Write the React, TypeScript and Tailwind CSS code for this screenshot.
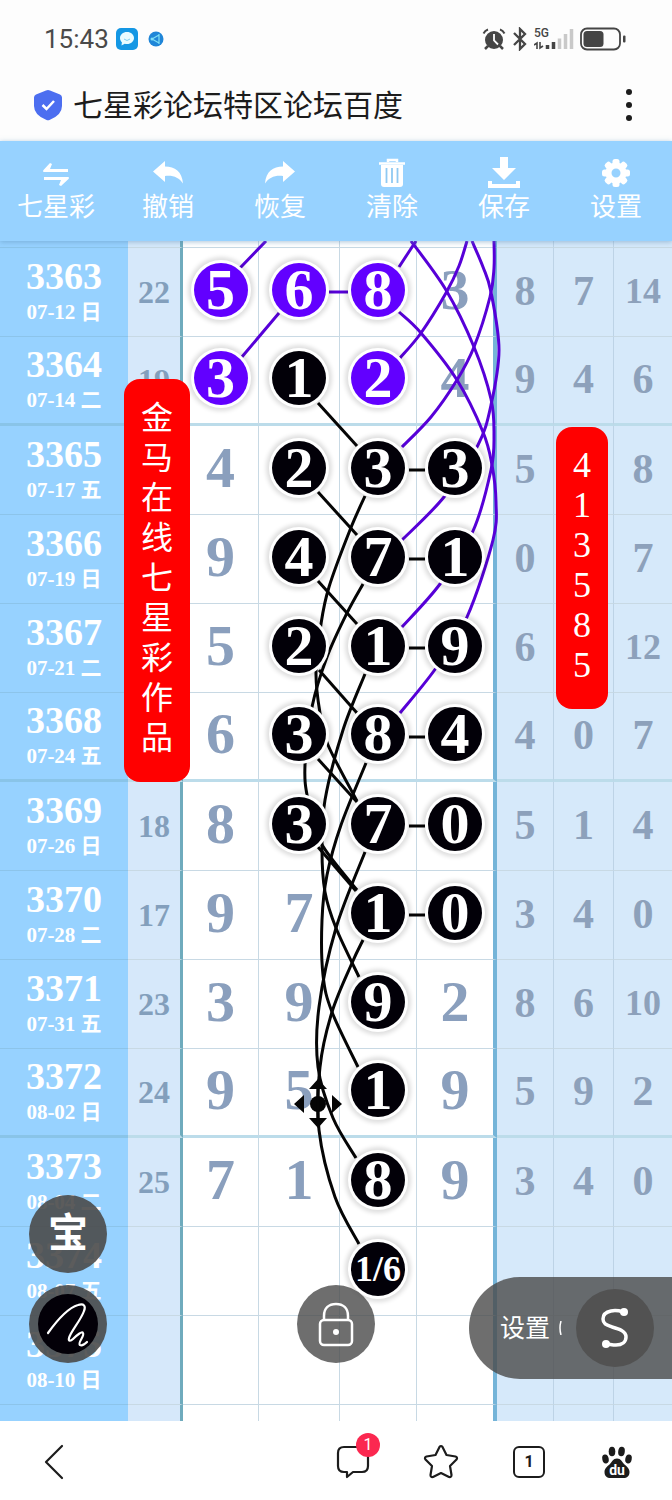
import type { ReactNode } from 'react'

interface Draw {
  id: string
  date: string
  sum: string
  main: string[]
  extra: string[]
}

// main cells: 'p' prefix is a purple ball, 'b' prefix is a black ball
const draws: Draw[] = [
  { id: '3363', date: '07-12 日', sum: '22', main: ['p5', 'p6', 'p8', '3'], extra: ['8', '7', '14'] },
  { id: '3364', date: '07-14 二', sum: '19', main: ['p3', 'b1', 'p2', '4'], extra: ['9', '4', '6'] },
  { id: '3365', date: '07-17 五', sum: '', main: ['4', 'b2', 'b3', 'b3'], extra: ['5', '', '8'] },
  { id: '3366', date: '07-19 日', sum: '', main: ['9', 'b4', 'b7', 'b1'], extra: ['0', '', '7'] },
  { id: '3367', date: '07-21 二', sum: '', main: ['5', 'b2', 'b1', 'b9'], extra: ['6', '', '12'] },
  { id: '3368', date: '07-24 五', sum: '', main: ['6', 'b3', 'b8', 'b4'], extra: ['4', '0', '7'] },
  { id: '3369', date: '07-26 日', sum: '18', main: ['8', 'b3', 'b7', 'b0'], extra: ['5', '1', '4'] },
  { id: '3370', date: '07-28 二', sum: '17', main: ['9', '7', 'b1', 'b0'], extra: ['3', '4', '0'] },
  { id: '3371', date: '07-31 五', sum: '23', main: ['3', '9', 'b9', '2'], extra: ['8', '6', '10'] },
  { id: '3372', date: '08-02 日', sum: '24', main: ['9', '5', 'b1', '9'], extra: ['5', '9', '2'] },
  { id: '3373', date: '08-04 二', sum: '25', main: ['7', '1', 'b8', '9'], extra: ['3', '4', '0'] },
  { id: '3374', date: '08-07 五', sum: '', main: ['', '', 'b1/6', ''], extra: ['', '', ''] },
  { id: '3375', date: '08-10 日', sum: '', main: ['', '', '', ''], extra: ['', '', ''] }
]

type Point = [number, number]

const purpleLines: Point[][] = [
  [[266, 241], [240, 268]],
  [[279, 313], [241, 358]],
  [[329, 292], [348, 292]],
  [[399, 267], [416, 241]],
  [[467, 241], [459, 266], [446, 293], [421, 333], [400, 358]],
  [[494, 241], [494, 268], [490, 297], [474, 347], [457, 380], [431, 417], [402, 447]],
  [[472, 241], [483, 267], [491, 292], [499, 350], [491, 405], [478, 445], [444, 497], [402, 540]],
  [[411, 241], [446, 290], [474, 347], [491, 399], [494, 435], [491, 470], [473, 531], [440, 584], [402, 627]],
  [[399, 312], [421, 333], [457, 380], [483, 432], [492, 465], [496, 502], [493, 540], [467, 617], [436, 668], [400, 713]]
]

const blackLines: Point[][] = [
  [[409, 470], [425, 470]],
  [[409, 559], [425, 559]],
  [[409, 648], [425, 648]],
  [[409, 737], [425, 737]],
  [[409, 826], [425, 826]],
  [[409, 915], [425, 915]],
  [[318, 403], [357, 446]],
  [[318, 492], [357, 535]],
  [[318, 581], [357, 624]],
  [[319, 670], [357, 713]],
  [[318, 759], [357, 802]],
  [[318, 847], [356, 891]],
  [[365, 496], [350, 530], [329, 587], [321, 624], [316, 673], [320, 713], [328, 745], [357, 801]],
  [[363, 584], [347, 613], [327, 657], [312, 707], [305, 765], [308, 800], [321, 843], [357, 890]],
  [[365, 674], [343, 730], [325, 800], [322, 850], [325, 892], [336, 928], [359, 977]],
  [[366, 763], [341, 825], [327, 875], [322, 920], [323, 975], [332, 1012], [358, 1067]],
  [[365, 852], [336, 928], [319, 1007], [318, 1067], [333, 1118], [356, 1158]],
  [[363, 940], [352, 963], [332, 1012], [320, 1067], [319, 1130], [335, 1197], [359, 1244]]
]

function smooth(pts: Point[]) {
  let d = `M${pts[0][0]} ${pts[0][1]}`
  for (let i = 0; i < pts.length - 1; i++) {
    const p0 = pts[i - 1] || pts[i]
    const p1 = pts[i]
    const p2 = pts[i + 1]
    const p3 = pts[i + 2] || p2
    d += ` C${p1[0] + (p2[0] - p0[0]) / 6} ${p1[1] + (p2[1] - p0[1]) / 6} ${p2[0] - (p3[0] - p1[0]) / 6} ${p2[1] - (p3[1] - p1[1]) / 6} ${p2[0]} ${p2[1]}`
  }
  return d
}

function MainCell({ value }: { value: string }) {
  const kind = value[0]
  if (kind !== 'p' && kind !== 'b') return <>{value}</>
  const text = value.slice(1)
  const color = kind === 'p' ? 'bg-[#6200ff]' : 'bg-[#020008]'
  const size = text.length > 1 ? 'text-[36px]' : 'text-[58px]'
  return (
    <span
      className={`relative z-10 mx-auto flex size-[54px] items-center justify-center rounded-full leading-none text-white ring-3 ring-white shadow-[0_0_4px_6px_rgba(0,0,0,0.13)] ${color} ${size}`}
    >
      {text}
    </span>
  )
}

function Row({ draw, thick }: { draw: Draw; thick: boolean }) {
  const line = thick ? 'border-b-3 border-b-[#bcdcea]' : 'border-b border-b-[#c8d9e4]'
  const blueLine = thick ? 'border-b-3 border-b-[#89c4e8]' : 'border-b border-b-[#8cc4ea]'
  return (
    <tr className="h-[89px]">
      <th scope="row" className={`bg-[#97d2ff] p-0 font-bold text-white ${blueLine}`}>
        <div className="text-[38px] leading-[38px]">{draw.id}</div>
        <div className="mt-0.5 text-[21px] leading-[30px]">{draw.date}</div>
      </th>
      <td className={`border-r-3 border-r-[#6fabbd] bg-[#d6e8fa] p-0 text-[32px] text-[#839fbc] ${line}`}>{draw.sum}</td>
      {draw.main.map((value, i) => (
        <td
          key={i}
          className={`bg-white p-0 pb-1 text-[58px] leading-none text-[#8a9fbd] ${line} ${i === 3 ? 'border-r-4 border-r-[#74b4d8]' : 'border-r border-r-[#c8d9e4]'}`}
        >
          <MainCell value={value} />
        </td>
      ))}
      {draw.extra.map((value, i) => (
        <td
          key={i}
          className={`border-r border-r-[#bdd3e6] bg-[#d6e9fa] p-0 pb-0.5 leading-none text-[#8da1bb] last:border-r-0 ${line} ${value.length > 1 ? 'text-[36px]' : 'text-[42px]'}`}
        >
          {value}
        </td>
      ))}
    </tr>
  )
}

// partial rows above and below the visible draws
function Spacer({ height, bordered }: { height: string; bordered: boolean }) {
  const line = bordered ? 'border-b border-b-[#c8d9e4]' : ''
  return (
    <tr className={height}>
      <td className={`bg-[#97d2ff] p-0 ${bordered ? 'border-b border-b-[#8cc4ea]' : ''}`} />
      <td className={`border-r-3 border-r-[#6fabbd] bg-[#d6e8fa] p-0 ${line}`} />
      <td className={`border-r border-r-[#c8d9e4] bg-white p-0 ${line}`} />
      <td className={`border-r border-r-[#c8d9e4] bg-white p-0 ${line}`} />
      <td className={`border-r border-r-[#c8d9e4] bg-white p-0 ${line}`} />
      <td className={`border-r-4 border-r-[#74b4d8] bg-white p-0 ${line}`} />
      <td className={`border-r border-r-[#bdd3e6] bg-[#d6e9fa] p-0 ${line}`} />
      <td className={`border-r border-r-[#bdd3e6] bg-[#d6e9fa] p-0 ${line}`} />
      <td className={`bg-[#d6e9fa] p-0 ${line}`} />
    </tr>
  )
}

function StatusBar() {
  return (
    <div className="flex h-[78px] items-center pr-[46px] pl-11 text-[#4a4a4a]">
      <span className="font-[Roboto,sans-serif] text-[26px]">15:43</span>
      <svg viewBox="0 0 22 22" className="ml-[7px] size-[22px]">
        <rect width="22" height="22" rx="5" fill="#1497e4" />
        <path d="M11 4c4 0 7 2.700 7 6s-3 6-7 6c-.8 0-1.500-.1-2.200-.3L5.500 17.500l.4-3.200C4.700 13.200 4 11.700 4 10c0-3.300 3-6 7-6z" fill="#e8fbff" />
        <path d="M8 11q3 3 6 0" stroke="#7fd0f2" fill="none" />
      </svg>
      <svg viewBox="0 0 16 16" className="ml-[10px] size-4">
        <circle cx="8" cy="8" r="7.500" fill="#1f86d8" />
        <path d="M4 8l7-4M4 8l7 4M11 3v10" stroke="#7fe0f5" strokeWidth="1.200" fill="none" />
        <circle cx="4" cy="8" r="1.500" fill="#7fe0f5" />
      </svg>
      <div className="ml-auto flex items-center">
        <svg viewBox="0 0 24 24" className="size-6" fill="none" stroke="#454545">
          <circle cx="12" cy="13" r="9" fill="#454545" stroke="none" />
          <path d="M1.500 6.500Q3 3.500 6 2.500M22.500 6.500Q21 3.500 18 2.500" strokeWidth="2" />
          <path d="M6 19l-3 3M18 19l3 3" strokeWidth="2.500" />
          <path d="M12 7v6.500l4 4" stroke="#fff" strokeWidth="1.800" />
        </svg>
        <svg viewBox="0 0 16 24" className="ml-[6px] h-6 w-4" fill="none" stroke="#454545" strokeWidth="2.300">
          <path d="M2 6l11 11-5 5V2l5 5L2 18" />
        </svg>
        <svg viewBox="0 0 40 24" className="ml-[6px] h-6 w-10">
          <text x="0" y="10" fontSize="12" fontWeight="500" fontFamily="Roboto, sans-serif" fill="#454545">5G</text>
          <path d="M0 18l3-2v6M6 15v6l3-2" stroke="#454545" strokeWidth="1.600" fill="none" />
          <path d="M13.500 22v-4M19.500 22v-7" stroke="#454545" strokeWidth="3.500" />
          <path d="M25.500 22V11.500M31.500 22V7M37.500 22V2" stroke="#c9c9c9" strokeWidth="3.500" />
        </svg>
        <svg viewBox="0 0 46 24" className="ml-[6px] h-6 w-[46px]">
          <rect x="1" y="1.500" width="39" height="21" rx="6" fill="none" stroke="#454545" strokeWidth="1.800" />
          <rect x="3.500" y="4" width="20" height="16" rx="3.500" fill="#454545" />
          <rect x="43" y="8.500" width="2.500" height="7" rx="1" fill="#454545" />
        </svg>
      </div>
    </div>
  )
}

function TitleBar() {
  return (
    <div className="flex h-[54px] items-center pr-[30px] pl-[33px]">
      <svg viewBox="0 0 30 32" className="h-8 w-[30px]">
        <path d="M15 1q1 0 2 .5l10 4q2 .9 2 3v8.500q0 9-12.500 14-1.500.5-3 0Q1 26 1 17V8.500q0-2.100 2-3l10-4q1-.5 2-.5z" fill="#4c6ef0" />
        <path d="M9.500 16l4 4 7.500-8" stroke="#fff" strokeWidth="2.500" fill="none" />
      </svg>
      <h1 className="ml-[10px] pb-1 text-[30px] leading-none text-[#1c1c1c]">七星彩论坛特区论坛百度</h1>
      <button aria-label="更多" className="ml-auto">
        <svg viewBox="0 0 26 36" className="h-9 w-[26px]" fill="#1c1c1c">
          <circle cx="13" cy="5" r="3" />
          <circle cx="13" cy="18" r="3" />
          <circle cx="13" cy="31" r="3" />
        </svg>
      </button>
    </div>
  )
}

const tools: { label: string; icon: ReactNode }[] = [
  {
    label: '七星彩',
    icon: <path d="M4 12h24v3H3.500q-1-1 0-2L10 6l2 1-2 5zM28.500 20H4v3h17l-2 5 2 1 7.500-7q1-1 0-2z" fill="#fff" />
  },
  {
    label: '撤销',
    icon: <path d="M1 14.500L13 4v5.500c10 0 17 5 18 17-4-6-10-8.500-18-7.500v6z" fill="#fff" />
  },
  {
    label: '恢复',
    icon: <path d="M31 14.500L19 4v5.500C9 9.500 2 14.500 1 26.500c4-6 10-8.500 18-7.500v6z" fill="#fff" />
  },
  {
    label: '清除',
    icon: (
      <>
        <path d="M3 6.500h26M12 5V3h9v2" stroke="#fff" strokeWidth="2.500" fill="none" />
        <path d="M5 8h22v19q0 3-3 3H8q-3 0-3-3z" fill="#fff" />
        <path d="M10.500 11v15M16 11v15M21.500 11v15" stroke="#8fc9f2" strokeWidth="1.800" />
      </>
    )
  },
  {
    label: '保存',
    icon: <path d="M12 0h8v11h8L16 23 4 11h8zM0 24h4v3h24v-3h4v7H0z" fill="#fff" />
  },
  {
    label: '设置',
    icon: (
      <>
        {[0, 45, 90, 135, 180, 225, 270, 315].map(a => (
          <rect key={a} x="12.500" y="2" width="7" height="8" rx="2.500" fill="#fff" transform={`rotate(${a} 16 16)`} />
        ))}
        <circle cx="16" cy="16" r="7.500" fill="none" stroke="#fff" strokeWidth="6" />
      </>
    )
  }
]

function Toolbar() {
  return (
    <div className="relative z-20 grid h-[100px] grid-cols-6 bg-[#97d2ff] pt-4 shadow-[0_1px_5px_rgba(90,140,180,0.5)]">
      {tools.map(tool => (
        <button key={tool.label} className="flex flex-col items-center text-[26px] leading-8 text-white">
          <svg viewBox="0 0 32 32" className="size-8">
            {tool.icon}
          </svg>
          <span>{tool.label}</span>
        </button>
      ))}
    </div>
  )
}

function Chart() {
  return (
    <main className="relative overflow-hidden">
      <table className="w-full table-fixed border-separate border-spacing-0 text-center font-['Liberation_Serif','Noto_Sans_CJK_SC',serif] font-bold">
        <colgroup>
          <col className="w-[128px]" />
          <col className="w-[55px]" />
          <col className="w-[76px]" />
          <col className="w-[81px]" />
          <col className="w-[77px]" />
          <col className="w-[80px]" />
          <col className="w-[57px]" />
          <col className="w-[60px]" />
          <col className="w-[58px]" />
        </colgroup>
        <tbody>
          <Spacer height="h-[7px]" bordered />
          {draws.map((draw, i) => (
            <Row key={draw.id} draw={draw} thick={i % 4 === 1} />
          ))}
          <Spacer height="h-4" bordered={false} />
        </tbody>
      </table>

      <svg
        viewBox="0 241 672 1180"
        preserveAspectRatio="none"
        className="pointer-events-none absolute inset-0 h-full w-full"
        fill="none"
        strokeWidth="3"
      >
        <g stroke="#5700d8">
          {purpleLines.map((pts, i) => <path key={i} d={smooth(pts)} />)}
        </g>
        <g stroke="#050505">
          {blackLines.map((pts, i) => <path key={i} d={smooth(pts)} />)}
        </g>
        <g fill="#050505">
          <circle cx="318" cy="1104" r="8" />
          <path d="M294 1104l10-9v18zM342 1104l-10-9v18zM318 1079l-9 10h18zM318 1128l-9-10h18z" />
          <path d="M318 1085v38" stroke="#050505" />
        </g>
      </svg>

      <div className="absolute top-[138px] left-[124px] z-10 flex w-[66px] flex-col items-center rounded-2xl bg-[#ff0000] pt-4 pb-[27px] text-[32px] leading-10 text-white">
        {'金马在线七星彩作品'.split('').map((char, i) => <span key={i}>{char}</span>)}
      </div>
      <div className="absolute top-[186px] right-[64px] z-10 flex w-[52px] flex-col items-center rounded-2xl bg-[#ff0000] pt-[18px] pb-[24px] font-['Liberation_Serif',serif] text-[36px] leading-10 text-white">
        {'413585'.split('').map((char, i) => <span key={i}>{char}</span>)}
      </div>

      <div className="absolute bottom-[58px] left-[29px] z-20 flex flex-col gap-3">
        <button className="flex size-[78px] items-center justify-center rounded-full bg-[#4a4a4a]/90 pb-2 text-[40px] font-bold leading-none text-white">
          宝
        </button>
        <button aria-label="画笔" className="flex size-[78px] items-center justify-center rounded-full bg-[#4a4a4a]/90">
          <svg viewBox="0 0 60 60" className="size-[60px] rounded-full bg-[#030008]" fill="none" stroke="#fff" strokeWidth="2.200" strokeLinecap="round">
            <path d="M10 39C20 25 30 14 40 11c6-2 8 1 6 6-3 9-13 20-15 27-1 4 2 3 4 1 4-4 9-8 10-6 2 3-6 10-3 12 2 1 5-1 7-3" />
          </svg>
        </button>
      </div>

      <button aria-label="锁定" className="absolute bottom-[58px] left-1/2 z-20 flex size-[78px] -translate-x-1/2 items-center justify-center rounded-full bg-[#4a4a4a]/80">
        <svg viewBox="0 0 36 46" className="h-[46px] w-9" fill="none" stroke="#fff" strokeWidth="2.500">
          <path d="M6 19v-4C6 7 11 3 18 3s12 4 12 12v4" />
          <rect x="2" y="19" width="32" height="25" rx="4" />
          <circle cx="18" cy="31" r="3" fill="#fff" stroke="none" />
        </svg>
      </button>

      <div className="absolute right-0 bottom-[42px] z-20 flex h-[102px] w-[203px] items-center rounded-l-full bg-[#4a4a4a]/80 pr-[18px] pl-[31px]">
        <button className="pb-1 text-[25px] leading-none text-white">设置</button>
        <svg viewBox="0 0 4 14" className="ml-2 h-[14px] w-1" fill="none" stroke="#fff" strokeWidth="1.500">
          <path d="M3 0Q1 7 3 14" />
        </svg>
        <button aria-label="曲线" className="ml-auto flex size-[78px] items-center justify-center rounded-full bg-[#525252]">
          <svg viewBox="0 0 30 44" className="h-11 w-[30px]" fill="none" stroke="#fff" strokeWidth="3.500">
            <path d="M23 6c-3-1-7-2-12-1-5 1-8 4-8 8 0 5 4 6 9 8 7 2 14 4 14 10 0 5-4 8-10 8-4 0-7-1-10-1" />
            <circle cx="24" cy="6" r="4" fill="#fff" stroke="none" />
            <circle cx="6" cy="38" r="4" fill="#fff" stroke="none" />
          </svg>
        </button>
      </div>
    </main>
  )
}

function BottomNav() {
  return (
    <nav className="flex h-[79px] items-center bg-white pt-0.5 pr-[11px] pl-[36px]">
      <button aria-label="返回" className="flex w-9 justify-center">
        <svg viewBox="0 0 20 36" className="h-9 w-5" fill="none" stroke="#1c1c1c" strokeWidth="2.200" strokeLinecap="round" strokeLinejoin="round">
          <path d="M18 2L2 18l16 16" />
        </svg>
      </button>
      <div className="ml-auto flex items-center">
        <button aria-label="评论" className="relative flex w-[88px] justify-center">
          <svg viewBox="0 0 34 34" className="size-[34px]" fill="none" stroke="#1c1c1c" strokeWidth="2.200" strokeLinejoin="round">
            <path d="M8 2h18q6 0 6 6v13q0 6-6 6H17l-6 5v-5H8q-6 0-6-6V8q0-6 6-6z" />
          </svg>
          <span className="absolute -top-3 left-[47px] flex size-6 items-center justify-center rounded-full bg-[#fb2850] font-[Roboto,sans-serif] text-base leading-none text-white">
            1
          </span>
        </button>
        <button aria-label="收藏" className="flex w-[88px] justify-center">
          <svg viewBox="0 0 36 36" className="size-9" fill="none" stroke="#1c1c1c" strokeWidth="2.200" strokeLinejoin="round">
            <path d="M16.500 3Q18 1 19.500 3l4 8 9 1.500q2.500 1 1 3L27 22l1.500 9q0 2.500-2.500 2l-8-4-8 4q-2.500.5-2.500-2L9 22l-6.500-6.500q-1.500-2 1-3L12.500 11z" />
          </svg>
        </button>
        <button aria-label="窗口" className="flex w-[88px] justify-center">
          <span className="flex size-8 items-center justify-center rounded-md border-2 border-[#1c1c1c] font-[Roboto,sans-serif] text-base font-bold leading-none text-[#1c1c1c]">
            1
          </span>
        </button>
        <button aria-label="百度" className="flex w-[88px] justify-center">
          <svg viewBox="0 0 32 34" className="h-[34px] w-8" fill="#1c1c1c">
            <ellipse cx="4.500" cy="14" rx="3.200" ry="4.500" transform="rotate(-12 4.500 14)" />
            <ellipse cx="11" cy="6.500" rx="3.300" ry="4.800" />
            <ellipse cx="20.500" cy="6.500" rx="3.300" ry="4.800" transform="rotate(8 20.500 6.500)" />
            <ellipse cx="27.500" cy="14" rx="3.200" ry="4.500" transform="rotate(12 27.500 14)" />
            <path d="M16 13.500c4 0 5 3.500 7.500 6 2.500 2.200 5 4 5 7.500 0 4-2.500 6-6 6H9.500c-3.500 0-6-2-6-6 0-3.500 2.500-5.300 5-7.500 2.500-2.500 3.500-6 7.500-6z" />
            <text x="16" y="30" fontSize="14" fontWeight="700" fontFamily="Roboto, sans-serif" textAnchor="middle" fill="#fff">du</text>
          </svg>
        </button>
      </div>
    </nav>
  )
}

export default function App() {
  return (
    <div className="min-h-screen bg-white font-['Noto_Sans_CJK_SC',sans-serif]">
      <header className="bg-[#fdfdfd] pb-[9px]">
        <StatusBar />
        <TitleBar />
      </header>
      <Toolbar />
      <Chart />
      <BottomNav />
    </div>
  )
}
